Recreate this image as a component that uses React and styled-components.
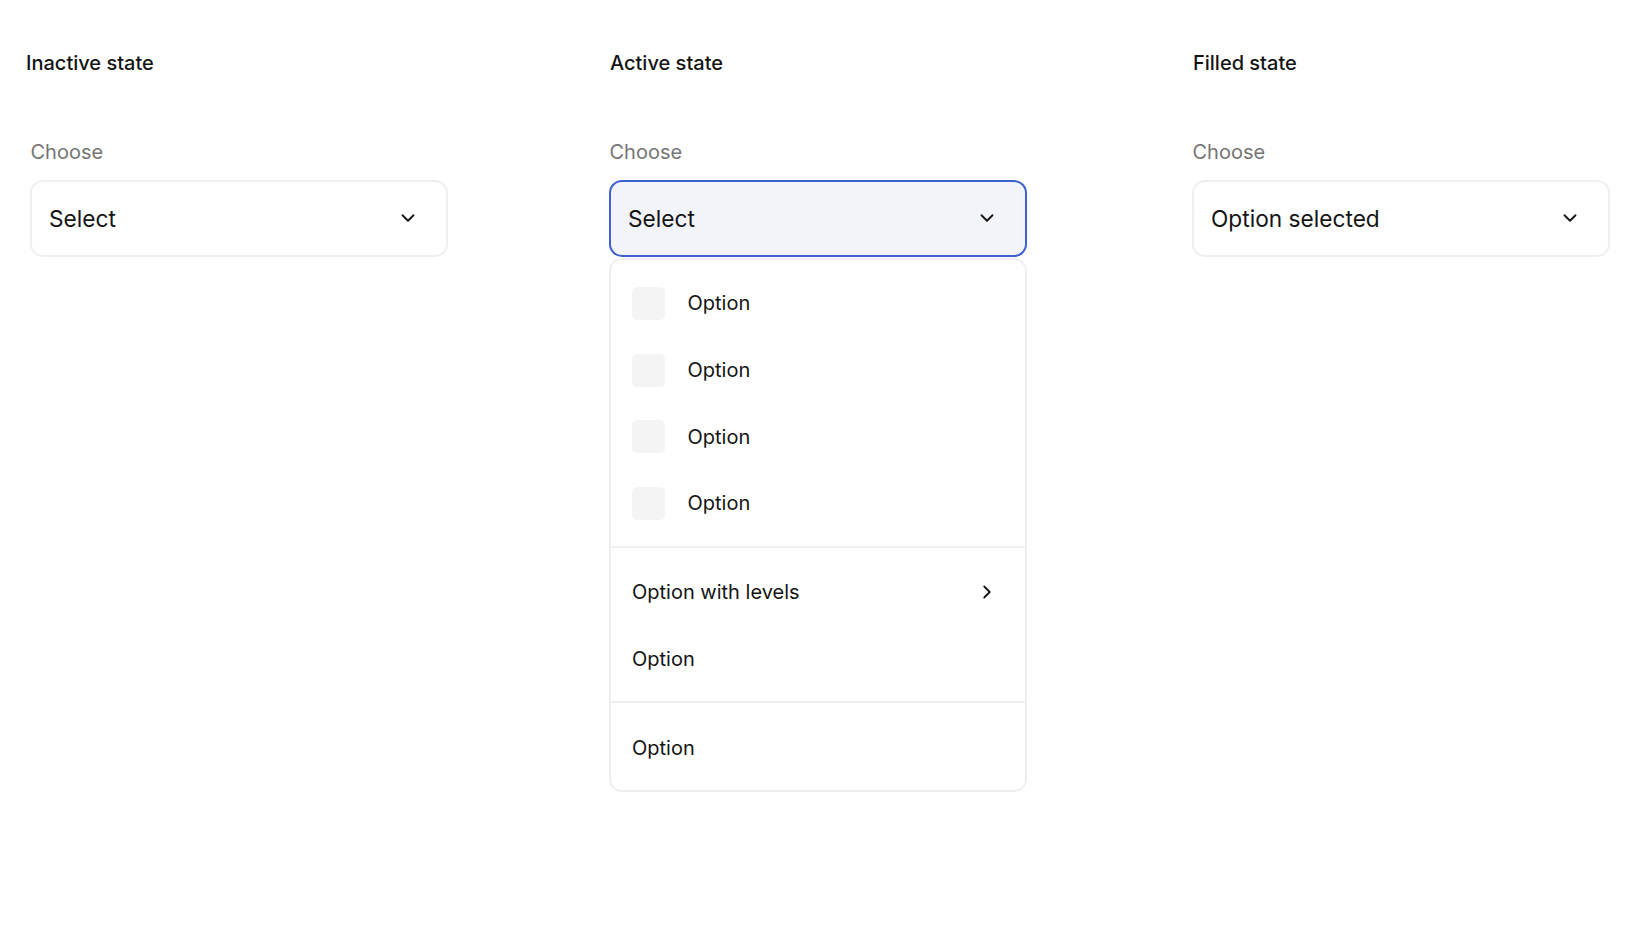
import styled, { createGlobalStyle } from 'styled-components';
import { ChevronDown, ChevronRight } from 'lucide-react';

const GlobalStyle = createGlobalStyle`
  html, body {
    margin: 0;
    background: #fff;
    font-family: Inter, "Liberation Sans", sans-serif;
    color: #141414;
  }
`;

export default function App() {
  return (
    <Page>
      <GlobalStyle />
      <Column>
        <Title $shift={-4}>Inactive state</Title>
        <Label>Choose</Label>
        <Trigger>
          Select
          <ChevronDown size={22} strokeWidth={2} />
        </Trigger>
      </Column>

      <Column>
        <Title>Active state</Title>
        <Label>Choose</Label>
        <Trigger $active>
          Select
          <ChevronDown size={22} strokeWidth={2} />
        </Trigger>
        <Menu>
          <Group>
            {[1, 2, 3, 4].map(n => (
              <Row key={n}>
                <Swatch />
                Option
              </Row>
            ))}
          </Group>
          <Group>
            <Row $spread>
              Option with levels
              <ChevronRight size={22} strokeWidth={2} />
            </Row>
            <Row>Option</Row>
          </Group>
          <Group $last>
            <Row>Option</Row>
          </Group>
        </Menu>
      </Column>

      <Column>
        <Title>Filled state</Title>
        <Label>Choose</Label>
        <Trigger>
          Option selected
          <ChevronDown size={22} strokeWidth={2} />
        </Trigger>
      </Column>
    </Page>
  );
}

const Page = styled.div`
  display: grid;
  grid-template-columns: 579px 583px 418px;
  padding: 48px 0 0 30px;
`;

const Column = styled.div`
  display: flex;
  flex-direction: column;
  width: 418px;
`;

const Title = styled.h2`
  margin: 0 0 59px ${props => props.$shift || 1}px;
  font-size: 20px;
  line-height: 30px;
  font-weight: 550;
  color: #141414;
`;

const Label = styled.div`
  margin: 0 0 13px 0.5px;
  font-size: 20px;
  line-height: 30px;
  color: #757575;
`;

const Trigger = styled.div`
  box-sizing: border-box;
  height: 76.5px;
  display: flex;
  align-items: center;
  justify-content: space-between;
  padding: 0 27.5px 0 17px;
  border: 2px solid ${props => (props.$active ? '#3f60d0' : '#efefef')};
  border-radius: 13px;
  background: ${props => (props.$active ? '#f3f4fa' : '#fff')};
  font-size: 22.7px;
`;

const Menu = styled.div`
  box-sizing: border-box;
  margin-top: 1.5px;
  border: 2px solid #efefef;
  border-radius: 13px;
`;

const Group = styled.div`
  padding: ${props => (props.$last ? '11.5px 0 9px' : '10.5px 0 9px')};

  &:first-child {
    padding: 10px 0 9.5px;
  }

  & + & {
    border-top: 2px solid #efefef;
  }
`;

const Row = styled.div`
  height: 66.7px;
  display: flex;
  align-items: center;
  justify-content: ${props => (props.$spread ? 'space-between' : 'flex-start')};
  padding: 0 27.5px 0 21px;
  font-size: 20px;
`;

const Swatch = styled.span`
  width: 33px;
  height: 33px;
  margin-right: 22.5px;
  border-radius: 5px;
  background: #f4f4f4;
`;
